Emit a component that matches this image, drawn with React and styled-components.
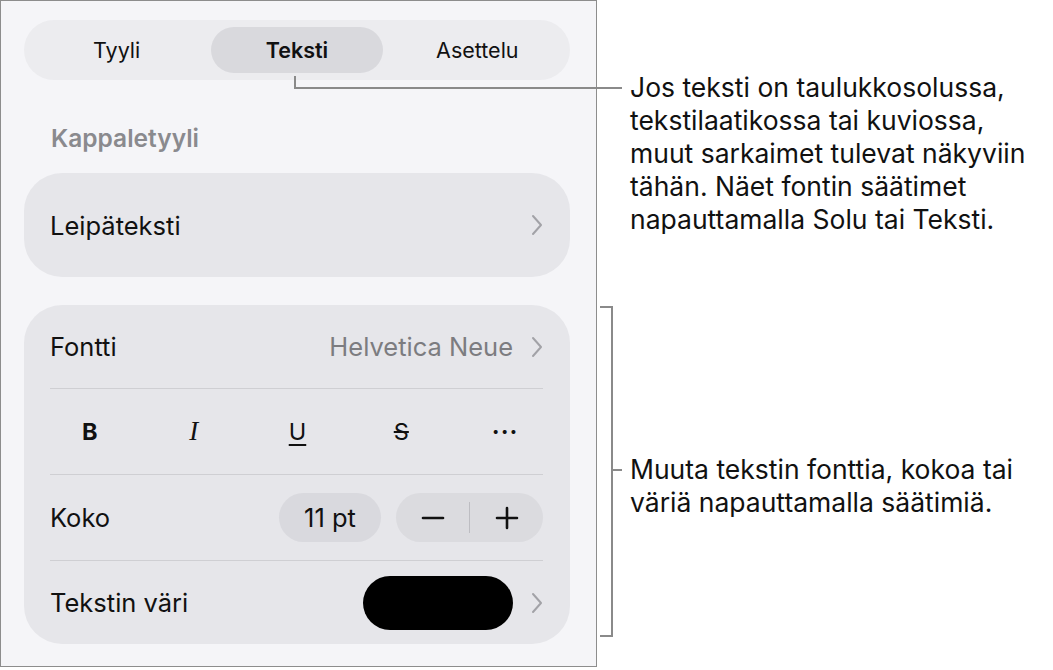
import React from 'react';
import styled, { createGlobalStyle } from 'styled-components';

const Global = createGlobalStyle`
  html, body {
    margin: 0;
    padding: 0;
    background: #ffffff;
  }
  body {
    font-family: Inter, "Noto Sans", "Liberation Sans", sans-serif;
    color: #111111;
  }
`;

const Page = styled.div`
  position: relative;
  display: flex;
  flex-direction: row;
  width: 1053px;
  height: 670px;
`;

const Panel = styled.div`
  box-sizing: border-box;
  width: 597px;
  height: 667px;
  border: 1px solid #8d8d8d;
  background: #f5f5f8;
  padding: 19px 26px 0 23px;
  display: flex;
  flex-direction: column;
`;

const Segmented = styled.div`
  height: 60px;
  box-sizing: border-box;
  padding: 7px;
  border-radius: 30px;
  background: #ececef;
  display: grid;
  grid-template-columns: repeat(3, 1fr);
  gap: 9px;
`;

const Seg = styled.div`
  display: flex;
  align-items: center;
  justify-content: center;
  border-radius: 24px;
  font-size: 21.5px;
  font-weight: ${p => (p.active ? 600 : 400)};
  background: ${p => (p.active ? '#d9d9dd' : 'transparent')};
  color: #111;
`;

const SectionTitle = styled.div`
  margin: 44px 0 0 27px;
  font-size: 24.5px;
  font-weight: 600;
  color: #8a8a8e;
  height: 28px;
  line-height: 28px;
`;

const Card = styled.div`
  margin-top: ${p => p.top}px;
  background: #e6e6ea;
  border-radius: 38px;
  padding: 0 27px 0 26px;
  display: flex;
  flex-direction: column;
`;

const Row = styled.div`
  height: ${p => p.h}px;
  display: flex;
  align-items: center;
  gap: ${p => p.gap || 18}px;
  border-top: ${p => (p.line ? '1px solid #cfcfd3' : 'none')};
`;

const Label = styled.div`
  flex: 1;
  font-size: 25.5px;
  color: #111;
`;

const Value = styled.div`
  font-size: 25.5px;
  color: #7c7c80;
`;

const FormatRow = styled.div`
  height: 85px;
  border-top: 1px solid #cfcfd3;
  display: flex;
  align-items: center;
`;

const FormatGrid = styled.div`
  flex: 1;
  margin: 0 -14px 0 -12px;
  display: grid;
  grid-template-columns: repeat(5, 1fr);
  align-items: center;
  justify-items: center;
  color: #111;
`;

const Fmt = styled.span`
  font-weight: ${p => (p.bold ? 700 : 400)};
  font-style: ${p => (p.italic ? 'italic' : 'normal')};
  font-family: ${p => (p.italic ? '"Liberation Serif", serif' : 'inherit')};
  text-decoration: ${p => p.deco || 'none'};
  text-decoration-thickness: 2px;
  text-underline-offset: 4px;
  letter-spacing: ${p => (p.dots ? '1px' : '0')};
  font-size: ${p => (p.italic ? '27px' : '23.5px')};
`;

const Pill = styled.div`
  height: ${p => p.h || 49}px;
  width: ${p => p.w}px;
  border-radius: ${p => (p.h || 49) / 2}px;
  background: ${p => p.bg || '#d9d9de'};
  display: flex;
  align-items: center;
  justify-content: center;
  font-size: 25.5px;
  color: #111;
`;

const Stepper = styled.div`
  height: 49px;
  width: 147px;
  border-radius: 25px;
  background: #dbdbdf;
  display: flex;
  align-items: center;
`;

const StepBtn = styled.div`
  flex: 1;
  display: flex;
  align-items: center;
  justify-content: center;
`;

const StepDivider = styled.div`
  width: 1px;
  height: 31px;
  background: #bdbdc2;
`;

const Notes = styled.div`
  display: flex;
  flex-direction: column;
  padding: 71px 0 0 33px;
`;

const Note = styled.p`
  margin: ${p => p.top || 0}px 0 0 0;
  font-size: 26.5px;
  line-height: 33px;
  color: #111;
  white-space: pre;
`;

const Leaders = styled.svg`
  position: absolute;
  left: 0;
  top: 0;
  pointer-events: none;
`;

const Chevron = () => (
  <svg width="12" height="22" viewBox="0 0 12 22">
    <path d="M2 2 L10 11 L2 20" fill="none" stroke="#a2a2a7" strokeWidth="2" strokeLinecap="round" strokeLinejoin="round" />
  </svg>
);

const Minus = () => (
  <svg width="24" height="24" viewBox="0 0 24 24">
    <path d="M2 12 H22" stroke="#111" strokeWidth="2.6" strokeLinecap="round" />
  </svg>
);

const Plus = () => (
  <svg width="24" height="24" viewBox="0 0 24 24">
    <path d="M2 12 H22 M12 2 V22" stroke="#111" strokeWidth="2.6" strokeLinecap="round" />
  </svg>
);

export default function App() {
  return (
    <Page>
      <Global />
      <Panel>
        <Segmented>
          <Seg>Tyyli</Seg>
          <Seg active>Teksti</Seg>
          <Seg>Asettelu</Seg>
        </Segmented>

        <SectionTitle>Kappaletyyli</SectionTitle>

        <Card top={21}>
          <Row h={104}>
            <Label>Leipäteksti</Label>
            <Chevron />
          </Row>
        </Card>

        <Card top={28}>
          <Row h={83}>
            <Label>Fontti</Label>
            <Value>Helvetica Neue</Value>
            <Chevron />
          </Row>
          <FormatRow>
            <FormatGrid>
              <Fmt bold>B</Fmt>
              <Fmt italic>I</Fmt>
              <Fmt deco="underline">U</Fmt>
              <Fmt deco="line-through">S</Fmt>
              <Fmt dots bold>···</Fmt>
            </FormatGrid>
          </FormatRow>
          <Row h={85} gap={15} line>
            <Label>Koko</Label>
            <Pill w={102}>11 pt</Pill>
            <Stepper>
              <StepBtn><Minus /></StepBtn>
              <StepDivider />
              <StepBtn><Plus /></StepBtn>
            </Stepper>
          </Row>
          <Row h={83} line>
            <Label>Tekstin väri</Label>
            <Pill w={150} h={54} bg="#000" />
            <Chevron />
          </Row>
        </Card>
      </Panel>

      <Notes>
        <Note>
          {'Jos teksti on taulukkosolussa,\ntekstilaatikossa tai kuviossa,\nmuut sarkaimet tulevat näkyviin\ntähän. Näet fontin säätimet\nnapauttamalla Solu tai Teksti.'}
        </Note>
        <Note top={217}>
          {'Muuta tekstin fonttia, kokoa tai\nväriä napauttamalla säätimiä.'}
        </Note>
      </Notes>

      <Leaders width="1053" height="670">
        <path d="M295 76 V88 H622" fill="none" stroke="#8a8a8a" strokeWidth="2" />
        <path d="M600 307 H612 V636 H600 M612 470 H622" fill="none" stroke="#8a8a8a" strokeWidth="2" />
      </Leaders>
    </Page>
  );
}
